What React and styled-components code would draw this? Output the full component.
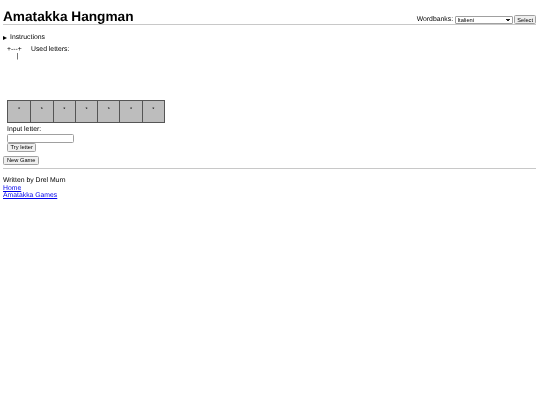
import React from 'react';
import styled, { createGlobalStyle } from 'styled-components';

const Global = createGlobalStyle`
	html, body {
		margin: 0;
		background: #fff;
	}
	body {
		padding: 0 3.4px;
		font-family: 'Liberation Sans', Arial, sans-serif;
		font-size: 6.83px;
		line-height: 7.86px;
		color: #000;
		text-rendering: geometricPrecision;
	}
	#root {
		will-change: transform;
		background: #fff;
	}
`;

const Header = styled.header`
	display: flex;
	justify-content: space-between;
	align-items: flex-end;
	height: 24px;
	border-bottom: 1px solid #c8c8c8;
`;

const Title = styled.h1`
	margin: 0;
	font-size: 13.66px;
	line-height: 14px;
	font-weight: bold;
`;

const Banks = styled.form`
	display: flex;
	align-items: center;
	gap: 1.5px;
`;

const Select = styled.select`
	appearance: none;
	width: 58px;
	height: 8px;
	padding: 0 0 0 2px;
	box-sizing: border-box;
	font-family: inherit;
	font-size: 5.7px;
	line-height: 6px;
	border: 1px solid #a0a0a0;
	border-radius: 1px;
	background:
		linear-gradient(45deg, transparent 50%, #222 50%) right 4px center / 2px 2px no-repeat,
		linear-gradient(-45deg, transparent 50%, #222 50%) right 2px center / 2px 2px no-repeat,
		#fff;
`;

const Button = styled.button`
	display: block;
	height: 9px;
	padding: 0 2.6px;
	box-sizing: border-box;
	font-family: inherit;
	font-size: 5.7px;
	line-height: 6px;
	color: #000;
	background: #efefef;
	border: 1px solid #a0a0a0;
	border-radius: 1.5px;
`;

const SelectButton = styled(Button)`
	padding: 0 2.2px;
`;

const Instructions = styled.div`
	display: flex;
	align-items: center;
	gap: 3px;
	margin-top: 9px;

	&::before {
		content: '';
		border-left: 4px solid #000;
		border-top: 2.5px solid transparent;
		border-bottom: 2.5px solid transparent;
	}
`;

const Game = styled.main`
	padding-left: 4px;
`;

const Status = styled.div`
	display: flex;
	gap: 9.2px;
	margin-top: 4px;
	height: 47px;
`;

const Gallows = styled.pre`
	margin: 0;
	font-family: inherit;
	line-height: 7.5px;
`;

const Word = styled.div`
	display: grid;
	grid-template-columns: repeat(7, 22.3px);
	width: max-content;
	border: 1px solid #555;
	margin-top: 7px;
`;

const Cell = styled.div`
	height: 21px;
	display: flex;
	align-items: center;
	justify-content: center;
	background: #bdbdbd;
	border-left: ${({ $first }) => ($first ? '0' : '1px solid #555')};
	font-size: 5.7px;
`;

const Label = styled.div`
	margin-top: 3px;
`;

const LetterInput = styled.input`
	display: block;
	width: 67px;
	height: 9px;
	padding: 0;
	box-sizing: border-box;
	border: 1px solid #a0a0a0;
	border-radius: 1.5px;
`;

const NewGame = styled(Button)`
	margin-top: 4px;
	padding: 0 3px;
`;

const Rule = styled.hr`
	margin: 3.5px 0 0;
	border: 0;
	border-top: 1px solid #c8c8c8;
`;

const Footer = styled.footer`
	margin-top: 7.5px;
`;

const FooterLink = styled.a`
	display: block;
	color: #00e;
	text-decoration: underline;
`;

const letters = ['*', '*', '*', '*', '*', '*', '*'];

export default function App() {
	return (
		<>
			<Global />
			<Header>
				<Title>Amatakka Hangman</Title>
				<Banks>
					<span>Wordbanks:</span>
					<Select defaultValue="Italieni">
						<option>Italieni</option>
					</Select>
					<SelectButton type="button">Select</SelectButton>
				</Banks>
			</Header>
			<Instructions>Instructions</Instructions>
			<Game>
				<Status>
					<Gallows>{'+---+\n     |'}</Gallows>
					<div>Used letters:</div>
				</Status>
				<Word>
					{letters.map((l, i) => (
						<Cell key={i} $first={i === 0}>{l}</Cell>
					))}
				</Word>
				<Label>Input letter:</Label>
				<LetterInput />
				<Button type="button">Try letter</Button>
			</Game>
			<NewGame type="button">New Game</NewGame>
			<Rule />
			<Footer>
				<div>Written by Drel Murn</div>
				<FooterLink href="#">Home</FooterLink>
				<FooterLink href="#">Amatakka Games</FooterLink>
			</Footer>
		</>
	);
}
